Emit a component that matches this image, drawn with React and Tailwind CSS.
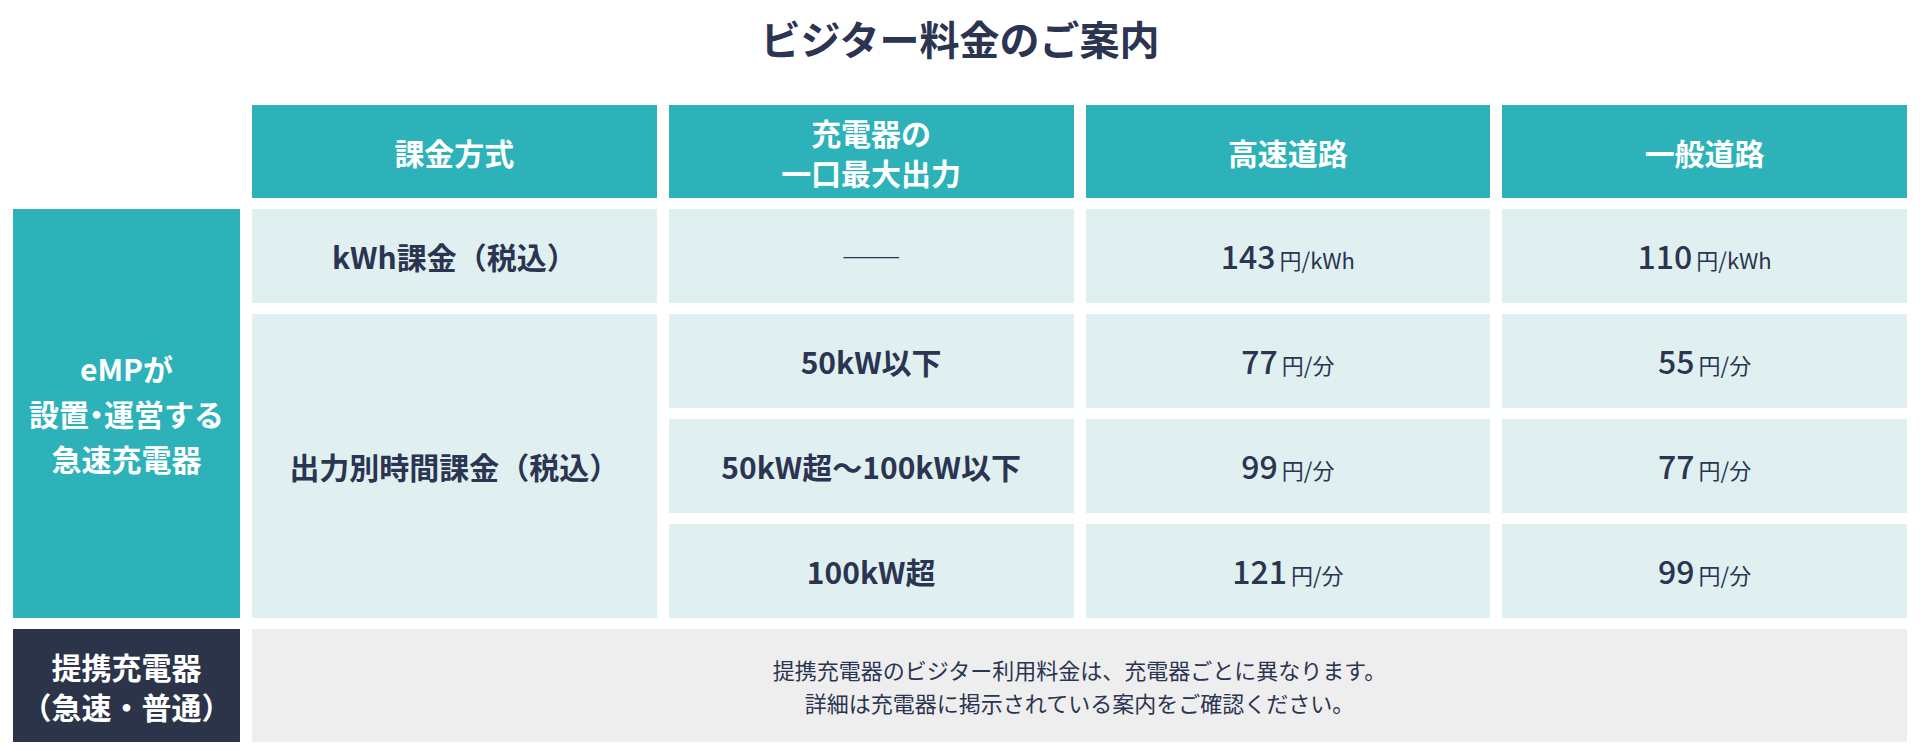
import React from "react";

const Head = ({ children }) => (
  <div className="flex items-center justify-center bg-[#2eb2b9] text-center text-[30px] font-bold leading-[40px] text-white">
    {children}
  </div>
);

const Label = ({ children, className = "" }) => (
  <div className={`flex items-center justify-center bg-[#e0f0f0] text-[30px] font-bold ${className}`}>
    {children}
  </div>
);

const Price = ({ value, unit }) => (
  <div className="flex items-baseline justify-center bg-[#e0f0f0] pt-[30px]">
    <span className="text-[32px] font-medium leading-none">{value}</span>
    <span className="ml-1 text-[22px] leading-none">{unit}</span>
  </div>
);

// half-width punctuation, as the reference sets it
const Half = ({ children }) => (
  <span className="[font-feature-settings:'halt']">{children}</span>
);

export default function App() {
  return (
    <div className="min-h-screen bg-white px-[13px] pt-2 font-['Noto_Sans_CJK_JP','Noto_Sans',sans-serif] text-[#2b3450]">
      <h1 className="mb-[37px] text-center text-[40px] font-bold leading-[60px]">ビジター料金のご案内</h1>

      <div className="grid grid-cols-[227px_repeat(4,minmax(0,1fr))] grid-rows-[93px_94px_94px_94px_94px_113px] gap-x-3 gap-y-[11px]">
        {/* header */}
        <div />
        <Head>課金方式</Head>
        <Head>
          <p>
            充電器の
            <br />
            一口最大出力
          </p>
        </Head>
        <Head>高速道路</Head>
        <Head>一般道路</Head>

        {/* eMP rows */}
        <div className="row-span-4 flex items-center justify-center bg-[#2eb2b9] text-center text-[30px] font-bold leading-[45px] text-white">
          <p>
            eMPが
            <br />
            設置<Half>・</Half>運営する
            <br />
            急速充電器
          </p>
        </div>
        <Label>kWh課金（税込）</Label>
        <Label className="font-medium">――</Label>
        <Price value="143" unit="円/kWh" />
        <Price value="110" unit="円/kWh" />

        <Label className="row-span-3">出力別時間課金（税込）</Label>
        <Label>50kW以下</Label>
        <Price value="77" unit="円/分" />
        <Price value="55" unit="円/分" />

        <Label>50kW超〜100kW以下</Label>
        <Price value="99" unit="円/分" />
        <Price value="77" unit="円/分" />

        <Label>100kW超</Label>
        <Price value="121" unit="円/分" />
        <Price value="99" unit="円/分" />

        {/* partner chargers */}
        <div className="flex items-center justify-center bg-[#2c344a] text-center text-[30px] font-bold leading-[40px] text-white">
          <p>
            提携充電器
            <br />
            <Half>（</Half>急速・普通<Half>）</Half>
          </p>
        </div>
        <div className="col-span-4 flex items-center justify-center bg-[#eeeeee] text-center text-[22px] leading-[33px]">
          <p>
            提携充電器のビジター利用料金は、充電器ごとに異なります。
            <br />
            詳細は充電器に掲示されている案内をご確認ください。
          </p>
        </div>
      </div>
    </div>
  );
}
